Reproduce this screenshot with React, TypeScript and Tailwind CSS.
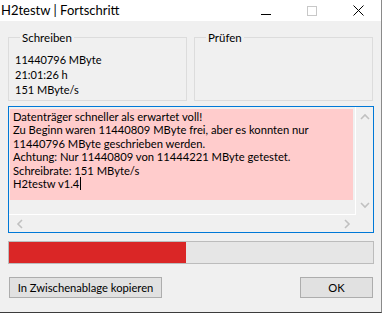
import type { ReactNode } from "react";

const font = { fontFamily: 'Lato, "Liberation Sans", sans-serif' };

function GroupBox({ title, children }: { title: string; children?: ReactNode }) {
  return (
    <fieldset className="h-[71px] w-[179px] border border-[#dcdcdc] px-[6px]">
      <legend className="ml-[5px] px-[2px] text-[11.5px] leading-[15px] text-black">{title}</legend>
      <div className="mt-[7px] text-[11px] leading-[15px] text-black">{children}</div>
    </fieldset>
  );
}

function Chevron({ dir }: { dir: "up" | "down" | "left" | "right" }) {
  const paths = {
    up: "M1 6 L5 2 L9 6",
    down: "M1 2 L5 6 L9 2",
    left: "M6 1 L2 5 L6 9",
    right: "M2 1 L6 5 L2 9",
  };
  const vertical = dir === "up" || dir === "down";
  return (
    <svg
      width={vertical ? 10 : 8}
      height={vertical ? 8 : 10}
      viewBox={vertical ? "0 0 10 8" : "0 0 8 10"}
      className="block"
    >
      <path d={paths[dir]} fill="none" stroke="#c0c0c0" strokeWidth="1.6" />
    </svg>
  );
}

export default function App() {
  const lines = [
    "Datenträger schneller als erwartet voll!",
    "Zu Beginn waren 11440809 MByte frei, aber es konnten nur",
    "11440796 MByte geschrieben werden.",
    "Achtung: Nur 11440809 von 11444221 MByte getestet.",
    "Schreibrate: 151 MByte/s",
  ];

  return (
    <div className="h-[315px] w-[385px] bg-white" style={font}>
      <div className="flex h-[313px] w-[382px] flex-col border-r border-b border-r-[#8a8a8a] border-b-[#3c3c3c]">
        {/* title bar */}
        <div className="flex h-[21px] shrink-0 items-center bg-white">
          <span className="pl-[1px] text-[13px] leading-none text-black">H2testw | Fortschritt</span>
          <div className="ml-auto flex h-full items-center">
            <div className="flex w-[46px] justify-center pt-[7px]">
              <div className="h-[1px] w-[10px] bg-black" />
            </div>
            <div className="flex w-[46px] justify-center">
              <div className="h-[10px] w-[10px] border border-[#c8c8c8]" />
            </div>
            <div className="flex w-[46px] justify-center">
              <svg width="11" height="11" viewBox="0 0 11 11">
                <path d="M0.5 0.5 L10.5 10.5 M10.5 0.5 L0.5 10.5" stroke="#000" strokeWidth="1" />
              </svg>
            </div>
          </div>
        </div>

        {/* body */}
        <div className="flex flex-1 flex-col bg-[#f0f0f0] pl-[8px] pr-[7px]">
          <div className="mt-[9px] flex gap-[7px]">
            <GroupBox title="Schreiben">
              <div>11440796 MByte</div>
              <div>21:01:26 h</div>
              <div>151 MByte/s</div>
            </GroupBox>
            <GroupBox title="Prüfen" />
          </div>

          {/* log box */}
          <div className="mt-[5px] flex h-[127px] w-[366px] flex-col border border-[#0078d7]">
            <div className="flex flex-1">
              <div className="flex flex-1 flex-col border-r border-b border-white pl-[1px] pt-[2px]">
                <div className="h-[91px] w-[343px] bg-[#ffcccc] pl-[3px] pt-[1px] text-[11.2px] leading-[13.4px] text-black">
                  {lines.map((l) => (
                    <div key={l} className="whitespace-pre">
                      {l}
                    </div>
                  ))}
                  <div className="flex items-center">
                    <span>H2testw v1.4</span>
                    <span className="ml-[1px] inline-block h-[13px] w-[1px] bg-black" />
                  </div>
                </div>
              </div>
              <div className="flex w-[17px] flex-col items-center justify-between pb-[6px] pt-[6px]">
                <Chevron dir="up" />
                <Chevron dir="down" />
              </div>
            </div>
            <div className="flex h-[17px] items-center justify-between pl-[7px] pr-[22px]">
              <Chevron dir="left" />
              <Chevron dir="right" />
            </div>
          </div>

          {/* progress bar */}
          <div className="mt-[8px] flex h-[23px] w-[366px] border border-[#bcbcbc] bg-[#e6e6e6]">
            <div className="h-full w-[177px] bg-[#da2626]" />
          </div>

          {/* buttons */}
          <div className="mt-[13px] flex justify-between pl-[1px] pr-[1px]">
            <button className="h-[21px] w-[153px] border border-[#adadad] bg-[#e1e1e1] text-[11.2px] leading-none text-black">
              In Zwischenablage kopieren
            </button>
            <button className="h-[21px] w-[73px] border border-[#adadad] bg-[#e1e1e1] text-[11.2px] leading-none text-black">
              OK
            </button>
          </div>
        </div>
      </div>
    </div>
  );
}
